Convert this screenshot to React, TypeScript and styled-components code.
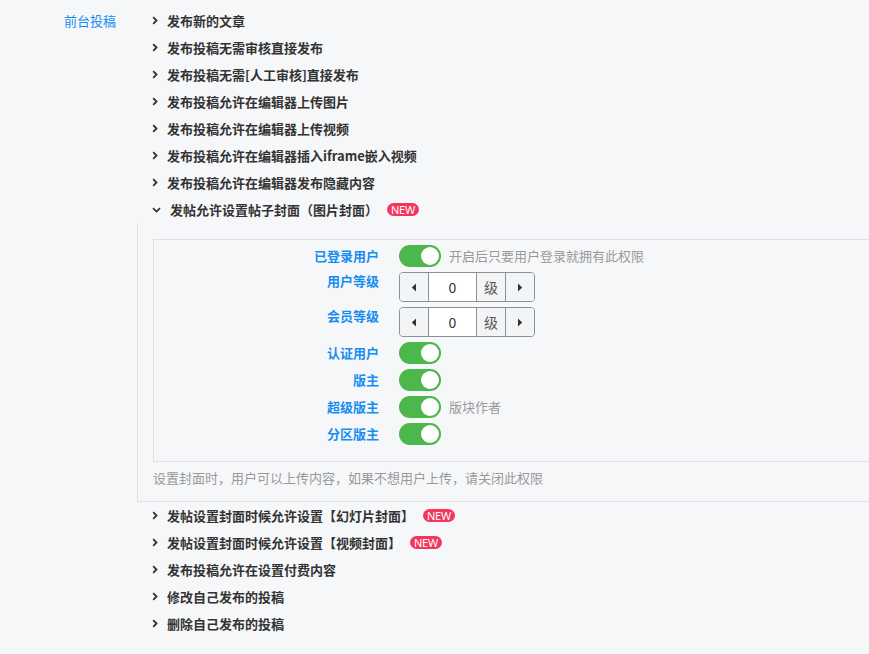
import React from "react";
import styled, { createGlobalStyle } from "styled-components";

const Global = createGlobalStyle`
  html, body { margin: 0; padding: 0; background: #f6f7f9; overflow: hidden; }
  body { font-family: "Noto Sans CJK SC", "Noto Sans", sans-serif; font-size: 13px; color: #333; }
`;

const Page = styled.div`
  display: flex;
  align-items: flex-start;
  padding-top: 7px;
  width: 1000px;
`;

const SideLabel = styled.div`
  width: 116px;
  text-align: right;
  color: #178df2;
  line-height: 27px;
  flex: none;
`;

const Main = styled.div`
  margin-left: 21px;
  width: 840px;
  display: flex;
  flex-direction: column;
`;

const Row = styled.div`
  display: flex;
  align-items: center;
  height: 27px;
  padding-left: 15px;
  gap: 9px;
  font-weight: 700;
  color: #333;
  white-space: nowrap;
`;

const Badge = styled.span`
  display: inline-flex;
  align-items: center;
  justify-content: center;
  height: 13px;
  padding: 0 4px;
  border-radius: 7px;
  background: #f5365c;
  color: #fff;
  font-family: "Noto Sans", sans-serif;
  font-weight: 400;
  font-size: 11px;
  letter-spacing: -0.3px;
`;

const Panel = styled.div`
  border-left: 1px solid #dfe1e4;
  border-bottom: 1px solid #dfe1e4;
  padding: 16px 0 13px 15px;
`;

const Box = styled.div`
  border: 1px solid #dfe1e4;
  padding: 5px 0 16px 0;
  display: flex;
  flex-direction: column;
  gap: 5px;
`;

const FormRow = styled.div`
  display: flex;
  align-items: flex-start;
`;

const FormLabel = styled.div<{ $lift?: boolean }>`
  width: 225px;
  text-align: right;
  color: #178df2;
  font-weight: 700;
  line-height: 22px;
  margin-top: ${(p) => (p.$lift ? "-2px" : "0")};
  margin-right: 20px;
  flex: none;
`;

const Switch = styled.div`
  width: 42px;
  height: 22px;
  border-radius: 11px;
  background: #4cb74b;
  position: relative;
  flex: none;
  &::after {
    content: "";
    position: absolute;
    right: 2px;
    top: 2px;
    width: 18px;
    height: 18px;
    border-radius: 50%;
    background: #fff;
  }
`;

const Desc = styled.span`
  color: #999;
  line-height: 22px;
  margin-left: 8px;
`;

const Stepper = styled.div`
  display: flex;
  height: 28px;
  border: 1px solid #8c9099;
  border-radius: 4px;
  overflow: hidden;
`;

const Cell = styled.div<{ $w: number; $white?: boolean; $last?: boolean }>`
  width: ${(p) => p.$w}px;
  display: flex;
  align-items: center;
  justify-content: center;
  background: ${(p) => (p.$white ? "#fff" : "#f3f4f6")};
  border-right: ${(p) => (p.$last ? "none" : "1px solid #8c9099")};
  color: ${(p) => (p.$white ? "#333" : "#555")};
  font-size: 14px;
`;

const Hint = styled.div`
  color: #999;
  margin-top: 6px;
  line-height: 20px;
`;

const ChevronRight = () => (
  <svg width="6" height="9" viewBox="0 0 6 9" style={{ flex: "none" }}>
    <path d="M1.2 1.2 L4.5 4.5 L1.2 7.8" fill="none" stroke="#333" strokeWidth="1.8" />
  </svg>
);

const ChevronDown = () => (
  <svg width="9" height="6" viewBox="0 0 9 6" style={{ flex: "none" }}>
    <path d="M1 1.2 L4.5 4.6 L8 1.2" fill="none" stroke="#333" strokeWidth="1.8" />
  </svg>
);

const TriLeft = () => (
  <svg width="6" height="9" viewBox="0 0 6 9">
    <path d="M5 0.5 L0.8 4.5 L5 8.5 Z" fill="#333" />
  </svg>
);

const TriRight = () => (
  <svg width="6" height="9" viewBox="0 0 6 9">
    <path d="M1 0.5 L5.2 4.5 L1 8.5 Z" fill="#333" />
  </svg>
);

const top = [
  "发布新的文章",
  "发布投稿无需审核直接发布",
  "发布投稿无需[人工审核]直接发布",
  "发布投稿允许在编辑器上传图片",
  "发布投稿允许在编辑器上传视频",
  "发布投稿允许在编辑器插入iframe嵌入视频",
  "发布投稿允许在编辑器发布隐藏内容",
];

const bottom: { t: string; n?: boolean }[] = [
  { t: "发帖设置封面时候允许设置【幻灯片封面】", n: true },
  { t: "发帖设置封面时候允许设置【视频封面】", n: true },
  { t: "发布投稿允许在设置付费内容" },
  { t: "修改自己发布的投稿" },
  { t: "删除自己发布的投稿" },
];

const StepperControl = () => (
  <Stepper>
    <Cell $w={28}><TriLeft /></Cell>
    <Cell $w={47} $white>0</Cell>
    <Cell $w={28}>级</Cell>
    <Cell $w={28} $last><TriRight /></Cell>
  </Stepper>
);

export default function App() {
  return (
    <>
      <Global />
      <Page>
        <SideLabel>前台投稿</SideLabel>
        <Main>
          {top.map((t) => (
            <Row key={t}>
              <ChevronRight />
              <span>{t}</span>
            </Row>
          ))}
          <Row>
            <ChevronDown />
            <span>发帖允许设置帖子封面（图片封面）</span>
            <Badge>NEW</Badge>
          </Row>
          <Panel>
            <Box>
              <FormRow>
                <FormLabel>已登录用户</FormLabel>
                <Switch />
                <Desc>开启后只要用户登录就拥有此权限</Desc>
              </FormRow>
              <FormRow>
                <FormLabel $lift>用户等级</FormLabel>
                <StepperControl />
              </FormRow>
              <FormRow>
                <FormLabel $lift>会员等级</FormLabel>
                <StepperControl />
              </FormRow>
              <FormRow>
                <FormLabel>认证用户</FormLabel>
                <Switch />
              </FormRow>
              <FormRow>
                <FormLabel>版主</FormLabel>
                <Switch />
              </FormRow>
              <FormRow>
                <FormLabel>超级版主</FormLabel>
                <Switch />
                <Desc>版块作者</Desc>
              </FormRow>
              <FormRow>
                <FormLabel>分区版主</FormLabel>
                <Switch />
              </FormRow>
            </Box>
            <Hint>设置封面时，用户可以上传内容，如果不想用户上传，请关闭此权限</Hint>
          </Panel>
          {bottom.map((b) => (
            <Row key={b.t}>
              <ChevronRight />
              <span>{b.t}</span>
              {b.n && <Badge>NEW</Badge>}
            </Row>
          ))}
        </Main>
      </Page>
    </>
  );
}
